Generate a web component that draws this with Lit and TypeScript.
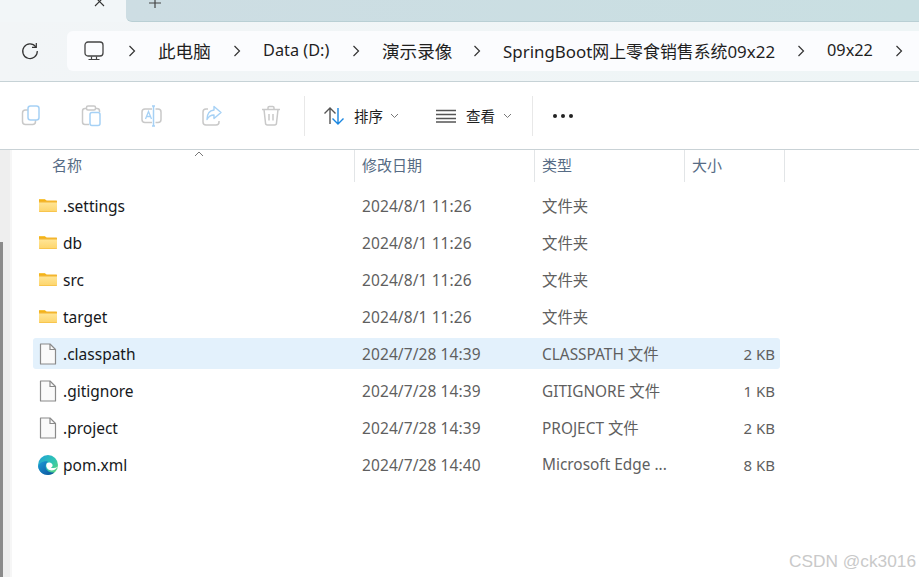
import { LitElement, html, css, svg } from "lit";
import { customElement } from "lit/decorators.js";

const folder = html`<svg class="ic" width="20" height="16" viewBox="0 0 20 16"><defs><linearGradient id="fg" x1="0" y1="0" x2="0" y2="1"><stop offset="0" stop-color="#ffe596"/><stop offset="1" stop-color="#fdd56c"/></linearGradient></defs><path d="M1 1.200h6l2 2h10v2H1z" fill="#f5b000"/><path d="M1 2.500h17.500a.8.8 0 0 1 .5.8V13.200a.8.8 0 0 1-.8.8H1.800a.8.8 0 0 1-.8-.8z" fill="#f3b52e"/><path d="M1 4.500h18v8.700a.8.8 0 0 1-.8.3H1.800a.8.8 0 0 1-.8-.3z" fill="url(#fg)"/></svg>`;
const file = html`<svg class="ic" width="20" height="24" viewBox="0 0 20 24"><path d="M2.500 2H12L17.500 7.500V22H2.500Z" fill="#fafafa" stroke="#8a8a8a" stroke-width="1.200" stroke-linejoin="round"/><path d="M12 2V7.500H17.500" fill="none" stroke="#8a8a8a" stroke-width="1.200"/></svg>`;
const edge = html`<svg class="ic" width="22" height="22" viewBox="0 0 22 22"><defs><linearGradient id="eb" x1="0" y1="0" x2="1" y2="1"><stop offset="0" stop-color="#1c9ad6"/><stop offset="1" stop-color="#0b4f9a"/></linearGradient><linearGradient id="et" x1="0" y1="0" x2="1" y2=".8"><stop offset="0" stop-color="#1f9fd8"/><stop offset=".6" stop-color="#2fc4b4"/><stop offset="1" stop-color="#5cd67a"/></linearGradient></defs><circle cx="11" cy="11" r="10" fill="url(#et)"/><path d="M11 7.500C6 6.500 2 9.500 1.100 12.500C1.800 17.500 6 21 11 21C13.500 21 15.800 20 17.500 18.500C13.500 19 9 17 8.700 13C8.600 10.500 9.500 8.500 11 7.500Z" fill="url(#eb)"/><path d="M9.800 9.200C8.600 11.500 9.300 14.500 12.500 16C15.500 17.200 19 15.500 20.600 13C18 14.500 15.300 14.300 13.800 13.500C15.600 13 16 11.500 15.300 10.200C14.300 8.300 11.200 7.800 9.800 9.200Z" fill="#fff"/></svg>`;

const G = "#c9c9c9", B = "#a6d1f5";
const icons = [
  svg`<rect x="1.500" y="5" width="13" height="14.500" rx="3" fill="none" stroke="${G}" stroke-width="1.500"/><rect x="7" y="1" width="11" height="14" rx="2.500" fill="#fff" stroke="${B}" stroke-width="1.500"/>`,
  svg`<path d="M5 3.500H4a2.500 2.500 0 0 0-2.500 2.500v11A2.500 2.500 0 0 0 4 19.500h4M15 3.500h1a2.500 2.500 0 0 1 2.500 2.500v1" fill="none" stroke="${G}" stroke-width="1.500"/><rect x="5.500" y="1" width="9" height="4" rx="1.500" fill="none" stroke="${G}" stroke-width="1.500"/><rect x="9" y="7.500" width="10" height="13" rx="2" fill="#fff" stroke="${B}" stroke-width="1.500"/>`,
  svg`<rect x="1" y="4" width="19" height="13.500" rx="3" fill="none" stroke="${G}" stroke-width="1.500"/><rect x="11" y="1" width="3.500" height="20" fill="#fff"/><path d="M11 1h3M12.500 1v20M11 21h3" fill="none" stroke="${B}" stroke-width="1.500"/><path d="M4.500 14L7.500 6.500L10.500 14M5.500 11.500h4" fill="none" stroke="${B}" stroke-width="1.300"/>`,
  svg`<path d="M7 4H5a3 3 0 0 0-3 3v10a3 3 0 0 0 3 3h10a3 3 0 0 0 3-3v-1" fill="none" stroke="${G}" stroke-width="1.500"/><path d="M13 1.500L20 7.500L13 13.500V10C9.500 10 7.500 11.500 6 14.500C6 9 8.500 5.500 13 5Z" fill="#fff" stroke="${B}" stroke-width="1.400" stroke-linejoin="round"/>`,
  svg`<path d="M1 4.500H19M7 4V2.800A1.300 1.300 0 0 1 8.300 1.500H11.700A1.300 1.300 0 0 1 13 2.800V4M3 4.500L4.500 18A2 2 0 0 0 6.500 20H13.500A2 2 0 0 0 15.500 18L17 4.500M8 9V15.500M12 9V15.500" fill="none" stroke="${G}" stroke-width="1.500"/>`,
];

const rows = [
  [folder, ".settings", "2024/8/1 11:26", "文件夹", "", false],
  [folder, "db", "2024/8/1 11:26", "文件夹", "", false],
  [folder, "src", "2024/8/1 11:26", "文件夹", "", false],
  [folder, "target", "2024/8/1 11:26", "文件夹", "", false],
  [file, ".classpath", "2024/7/28 14:39", "CLASSPATH 文件", "2 KB", true],
  [file, ".gitignore", "2024/7/28 14:39", "GITIGNORE 文件", "1 KB", false],
  [file, ".project", "2024/7/28 14:39", "PROJECT 文件", "2 KB", false],
  [edge, "pom.xml", "2024/7/28 14:40", "Microsoft Edge ...", "8 KB", false],
] as const;

const crumbs = [
  { t: "此电脑", w: 105, c: "cjk" },
  { t: "Data (D:)", w: 119, c: "lat" },
  { t: "演示录像", w: 121, c: "cjk" },
  { t: "SpringBoot网上零食销售系统09x22", w: 324, c: "long" },
  { t: "09x22", w: 98, c: "lat" },
];

const chev = html`<svg class="crumb-sep" width="8" height="12" viewBox="0 0 8 12"><path d="M1.500 1L6.500 6L1.500 11" fill="none" stroke="#333" stroke-width="1.200"/></svg>`;
const small = html`<svg width="9" height="6" viewBox="0 0 9 6"><path d="M1 1L4.500 4.500L8 1" fill="none" stroke="#777" stroke-width="1"/></svg>`;

@customElement("app-root")
export class AppRoot extends LitElement {
  static styles = css`
    :host { display: block; width: 919px; height: 577px; overflow: hidden; background: #fff;
      font-family: "Noto Sans", "Noto Sans CJK SC", sans-serif; color: #1a1a1a; }
    .tabs { height: 22px; display: flex; background: #f2f6f8; box-sizing: border-box; }
    .active { width: 126px; position: relative; flex: none; }
    .close { position: absolute; left: 94px; top: -2px; }
    .strip { flex: 1; background: linear-gradient(90deg,#cddde3,#c9dfe2); border-bottom: 1px solid #b9cfd4; border-bottom-left-radius: 6px; padding-left: 23px; }
    .plus { display: block; margin-top: -3px; }
    .addr { height: 60px; box-sizing: border-box; background: linear-gradient(90deg,#f2f5f7,#eef5f6); border-bottom: 1px solid #c6d2d6; display: flex; align-items: center; padding: 0 0 1px 21px; }
    .refresh { width: 18px; height: 18px; margin-right: 28px; flex: none; }
    .bar { flex: 1; height: 40px; background: #fbfcfe; border-radius: 6px 0 0 6px; display: flex; align-items: center; padding-left: 17px; white-space: nowrap; color: #1f1f1f; }
    .pc { flex: none; margin-right: 24px; }
    .crumb-sep { flex: none; }
    .crumb { flex: none; margin: 0 1px 2px 22px; }
    .crumb.cjk { font-size: 17.600px; }
    .crumb.lat { font-size: 16.300px; }
    .crumb.long { font-size: 16.900px; }
    .toolbar { height: 68px; box-sizing: border-box; border-bottom: 1px solid #c9d2d6; display: flex; align-items: center; padding: 0 0 0 21px; }
    .tool { width: 21px; height: 22px; margin-right: 39px; flex: none; }
    .divider { width: 1px; height: 40px; background: #e8e8e8; flex: none; }
    .div1 { margin-left: -17px; }
    .div2 { margin-left: 20px; }
    .cmd { display: flex; align-items: center; font-size: 14.500px; color: #1f1f1f; flex: none; }
    .sort-cmd { margin-left: 18px; }
    .view-cmd { margin-left: 37px; }
    .lbl { margin: 0 6px 0 9px; width: 30px; }
    .view-cmd .lbl { margin-left: 10px; margin-right: 7px; }
    .dots { display: flex; gap: 4px; margin-left: 20px; }
    .dots i { width: 4px; height: 4px; border-radius: 50%; background: #222; display: block; }
    .main { position: relative; height: 427px; }
    .gutter { position: absolute; left: 0; top: 0; bottom: 0; width: 10px; background: #eeeeee; border-right: 2px solid #f6f6f6; }
    .thumb { position: absolute; left: 0; top: 92px; bottom: 0; width: 3px; background: #8b8b8b; }
    .head { height: 33px; display: grid; grid-template-columns: 355px 180px 150px 100px; font-size: 15px; color: #566b85; margin-bottom: 7px; position: relative; }
    .head div { border-right: 1px solid #e2e5e7; display: flex; align-items: center; padding: 0 0 3px 7px; box-sizing: border-box; height: 32px; }
    .head div:first-child { padding-left: 52px; }
    .sort { position: absolute; left: 194px; top: 1px; }
    .row { height: 31px; margin: 0 139px 6px 33px; display: grid; grid-template-columns: 30px 299px 180px 143px 1fr; align-items: center; border-radius: 3px; white-space: nowrap; }
    .row.sel { background: #e3f1fc; }
    .ico { display: flex; justify-content: center; align-items: center; }
    .ic { display: block; }
    .name { color: #16181c; font-size: 15.500px; }
    .date, .type, .size { color: #5f5f5f; font-size: 15px; }
    .date { font-size: 15.500px; letter-spacing: .1px; }
    .type { font-size: 15.400px; }
    .size { text-align: right; padding-right: 5px; }
    .wm { position: absolute; right: 3px; bottom: 5px; font-family: "Liberation Sans", sans-serif; font-size: 17.300px; color: #c9c9c9; }
  `;

  render() {
    return html`
      <div class="tabs">
        <div class="active"><svg class="close" width="12" height="10" viewBox="0 0 12 10"><path d="M1 -1L10 8M10 -1L1 8" stroke="#333" stroke-width="1.100" fill="none"/></svg></div>
        <div class="strip"><svg class="plus" width="12" height="12" viewBox="0 0 12 12"><path d="M6 0V11M0 6H12" stroke="#444" stroke-width="1.200"/></svg></div>
      </div>
      <div class="addr">
        <svg class="refresh" viewBox="0 0 18 18"><path d="M14.800 4.800A7.300 7.300 0 1 0 16.300 9" fill="none" stroke="#333" stroke-width="1.200"/><path d="M15.300 1V5.300H11" fill="none" stroke="#333" stroke-width="1.200"/></svg>
        <div class="bar">
          <svg class="pc" width="20" height="20" viewBox="0 0 20 20"><rect x="1" y="1" width="18" height="14" rx="3" fill="none" stroke="#444" stroke-width="1.300"/><path d="M7.500 15.500V18M12.500 15.500V18M4.500 18.500H15.500" stroke="#444" stroke-width="1.200" fill="none"/></svg>
          ${crumbs.map((c) => html`${chev}<span class="crumb ${c.c}" style="width:${c.w - 31}px">${c.t}</span>`)}
          ${chev}
        </div>
      </div>
      <div class="toolbar">
        ${icons.map((p) => html`<svg class="tool" viewBox="0 0 21 22">${p}</svg>`)}
        <div class="divider div1"></div>
        <div class="cmd sort-cmd">
          <svg width="22" height="20" viewBox="0 0 22 20"><path d="M7 18V2M1.500 7.500L7 2L12.500 7.500" fill="none" stroke="#555" stroke-width="1.400"/><path d="M15 2V18M9.500 12.500L15 18L20.500 12.500" fill="none" stroke="#1a86e0" stroke-width="1.400"/></svg>
          <span class="lbl">排序</span>${small}
        </div>
        <div class="cmd view-cmd">
          <svg width="20" height="14" viewBox="0 0 20 14"><path d="M0 1.500H20M0 5.500H20M0 9.500H20M0 13H20" stroke="#555" stroke-width="1.300"/></svg>
          <span class="lbl">查看</span>${small}
        </div>
        <div class="divider div2"></div>
        <div class="dots"><i></i><i></i><i></i></div>
      </div>
      <div class="main">
        <div class="head">
          <div>名称</div><div>修改日期</div><div>类型</div><div>大小</div>
          <svg class="sort" width="10" height="6" viewBox="0 0 10 6"><path d="M1 5L5 1L9 5" fill="none" stroke="#777" stroke-width="1"/></svg>
        </div>
        ${rows.map((r) => html`<div class="row ${r[5] ? "sel" : ""}">
          <div class="ico">${r[0]}</div><div class="name">${r[1]}</div><div class="date">${r[2]}</div><div class="type">${r[3]}</div><div class="size">${r[4]}</div>
        </div>`)}
        <div class="gutter"><div class="thumb"></div></div>
        <div class="wm">CSDN @ck3016</div>
      </div>
    `;
  }
}
